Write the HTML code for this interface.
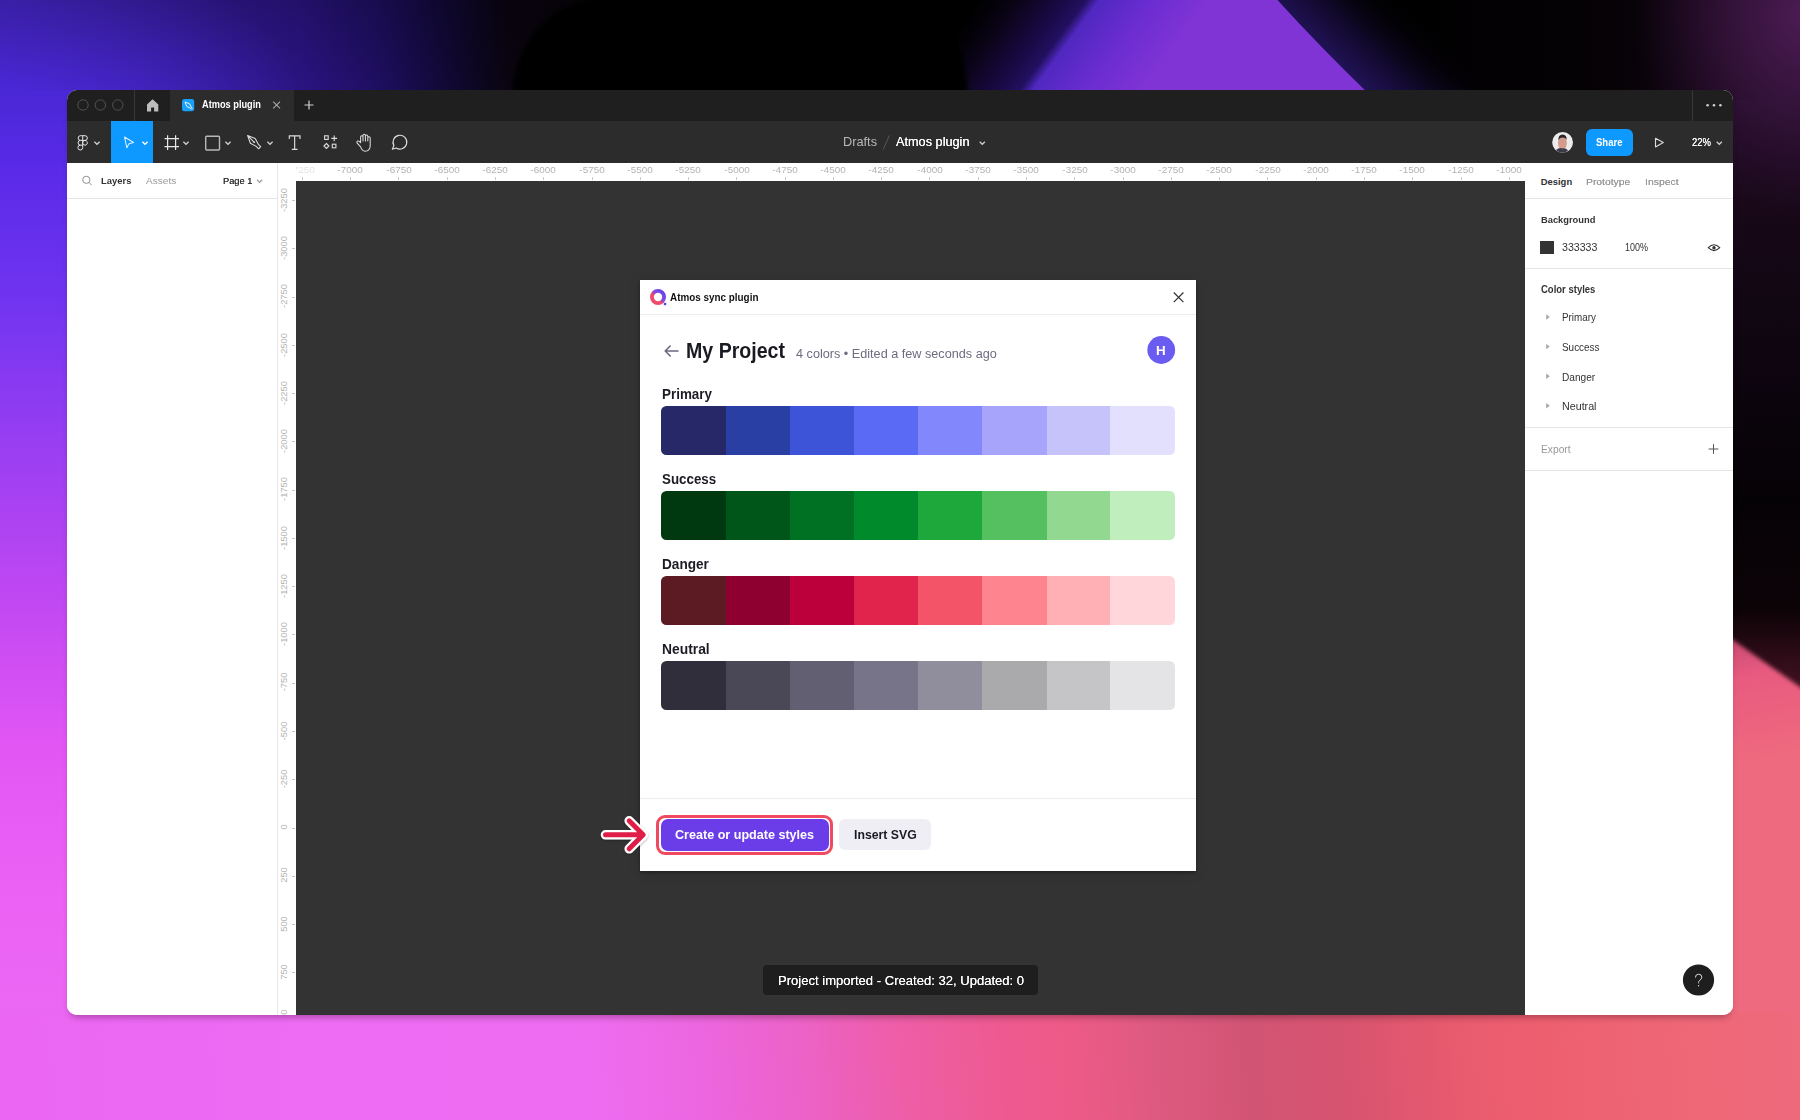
<!DOCTYPE html><html><head><meta charset="utf-8"><style>
*{box-sizing:border-box;margin:0;padding:0}
html,body{width:1800px;height:1120px;overflow:hidden}
body{position:relative;font-family:"Liberation Sans",sans-serif;background:#000}
.abs{position:absolute}
.t{position:absolute;white-space:nowrap;line-height:1}
.b{font-weight:bold}
svg{position:absolute;overflow:visible}
#win{position:absolute;left:67px;top:90px;width:1666px;height:925px;border-radius:10px;overflow:hidden;background:#fff;box-shadow:0 5px 7px -3px rgba(40,0,20,.35)}
</style></head><body>
<div class="abs" style="left:0;top:0;width:1800px;height:1120px;overflow:hidden"><svg width="1800" height="1120" style="left:0;top:0;position:absolute">
<defs>
 <linearGradient id="gTop" x1="0" y1="0" x2="1800" y2="0" gradientUnits="userSpaceOnUse">
  <stop offset="0" stop-color="#4626cc"/><stop offset="0.056" stop-color="#3c20b0"/><stop offset="0.111" stop-color="#321a98"/>
  <stop offset="0.167" stop-color="#2a1482"/><stop offset="0.211" stop-color="#1e0e60"/><stop offset="0.239" stop-color="#140a40"/>
  <stop offset="0.267" stop-color="#0c0620"/><stop offset="0.283" stop-color="#0a0410"/><stop offset="0.33" stop-color="#080308"/><stop offset="0.45" stop-color="#040204"/><stop offset="0.5" stop-color="#000"/><stop offset="0.76" stop-color="#000"/>
  <stop offset="0.9" stop-color="#060206"/><stop offset="0.95" stop-color="#140616"/><stop offset="1" stop-color="#200c26"/>
 </linearGradient>
 <radialGradient id="gTL" cx="0" cy="95" r="300" gradientUnits="userSpaceOnUse" gradientTransform="translate(0,95) scale(1,0.5) translate(0,-95)">
  <stop offset="0" stop-color="#4a28d8" stop-opacity="0.9"/><stop offset="1" stop-color="#4a28d8" stop-opacity="0"/>
 </radialGradient>
 <radialGradient id="gTR" cx="1805" cy="15" r="170" gradientUnits="userSpaceOnUse" gradientTransform="translate(1805,15) scale(1,1.2) translate(-1805,-15)">
  <stop offset="0" stop-color="#4c1c54" stop-opacity="1"/><stop offset="0.5" stop-color="#3a1540" stop-opacity="0.7"/><stop offset="1" stop-color="#2a0f30" stop-opacity="0"/>
 </radialGradient>
 <linearGradient id="gRib" x1="956.8" y1="28" x2="1108" y2="140" gradientUnits="userSpaceOnUse">
  <stop offset="0" stop-color="#080310" stop-opacity="0"/><stop offset="0.214" stop-color="#0e0520"/><stop offset="0.379" stop-color="#1a0a48"/>
  <stop offset="0.464" stop-color="#221060"/><stop offset="0.521" stop-color="#5028c0"/><stop offset="0.736" stop-color="#6a2cd0"/><stop offset="1" stop-color="#8034d6"/>
 </linearGradient>
 <linearGradient id="gRib2" x1="1300" y1="0" x2="1380" y2="95" gradientUnits="userSpaceOnUse">
  <stop offset="0" stop-color="#8436d6"/><stop offset="1" stop-color="#9238d8"/>
 </linearGradient>
 <linearGradient id="gGlow" x1="1318" y1="45" x2="1420" y2="-65" gradientUnits="userSpaceOnUse">
  <stop offset="0" stop-color="#201256"/><stop offset="0.25" stop-color="#100828"/><stop offset="0.6" stop-color="#000" stop-opacity="0"/>
 </linearGradient>
 <linearGradient id="gTopDark" x1="0" y1="0" x2="0" y2="90" gradientUnits="userSpaceOnUse">
  <stop offset="0" stop-color="#000" stop-opacity="0.2"/><stop offset="1" stop-color="#000" stop-opacity="0"/>
 </linearGradient>
 <linearGradient id="gLeft" x1="0" y1="90" x2="0" y2="1030" gradientUnits="userSpaceOnUse">
  <stop offset="0" stop-color="#4928d6"/><stop offset="0.085" stop-color="#5a2ae8"/><stop offset="0.22" stop-color="#7034f0"/>
  <stop offset="0.38" stop-color="#9a3ef2"/><stop offset="0.54" stop-color="#c048f2"/><stop offset="0.70" stop-color="#e256f4"/>
  <stop offset="0.86" stop-color="#ec62f4"/><stop offset="1" stop-color="#ea68f3"/>
 </linearGradient>
 <linearGradient id="gRight" x1="0" y1="100" x2="0" y2="700" gradientUnits="userSpaceOnUse">
  <stop offset="0" stop-color="#200c26"/><stop offset="0.18" stop-color="#180818"/><stop offset="0.43" stop-color="#0e0510"/>
  <stop offset="0.67" stop-color="#050205"/><stop offset="0.85" stop-color="#0c0307"/><stop offset="0.93" stop-color="#2e0c18"/><stop offset="1" stop-color="#4a1424"/>
 </linearGradient>
 <linearGradient id="gPinkR" x1="1733" y1="640" x2="1760" y2="760" gradientUnits="userSpaceOnUse">
  <stop offset="0" stop-color="#c84a70"/><stop offset="0.3" stop-color="#e85a80"/><stop offset="1" stop-color="#ee6a7e"/>
 </linearGradient>
 <linearGradient id="gBot" x1="0" y1="1120" x2="1800" y2="1000" gradientUnits="userSpaceOnUse">
  <stop offset="0" stop-color="#ea66f3"/><stop offset="0.17" stop-color="#ee6cf4"/><stop offset="0.333" stop-color="#ee6cf0"/>
  <stop offset="0.389" stop-color="#ec66e0"/><stop offset="0.444" stop-color="#ec62c8"/><stop offset="0.5" stop-color="#ee5ea8"/>
  <stop offset="0.556" stop-color="#ee5a90"/><stop offset="0.594" stop-color="#ee5a88"/><stop offset="0.639" stop-color="#de5a80"/>
  <stop offset="0.694" stop-color="#d25474"/><stop offset="0.75" stop-color="#d85470"/><stop offset="0.806" stop-color="#e85a6e"/>
  <stop offset="0.861" stop-color="#ee6070"/><stop offset="0.944" stop-color="#ee6878"/><stop offset="1" stop-color="#ee6a7c"/>
 </linearGradient>
 <filter id="bl2"><feGaussianBlur stdDeviation="2"/></filter>
 <filter id="bl8" x="-20%" y="-50%" width="140%" height="200%"><feGaussianBlur stdDeviation="8"/></filter>
</defs>
<rect x="0" y="0" width="1800" height="1120" fill="#000"/>
<rect x="0" y="0" width="1800" height="100" fill="url(#gTop)"/>
<rect x="0" y="0" width="520" height="100" fill="url(#gTL)"/>
<rect x="0" y="0" width="700" height="90" fill="url(#gTopDark)"/>

<path d="M1268,-6 L1272,0 Q1318,45 1371,96 L1560,96 L1560,-6 Z" fill="url(#gGlow)"/>
<path d="M800,96 L910,-6 L1272,-6 Q1318,45 1371,96 Z" fill="url(#gRib)"/>
<path d="M512,96 C515,40 550,2 600,-2 L905,-2 C950,2 965,45 968,96 Z" fill="#000" filter="url(#bl2)"/>
<rect x="0" y="90" width="90" height="945" fill="url(#gLeft)"/>
<rect x="1710" y="100" width="90" height="605" fill="url(#gRight)"/>
<rect x="1550" y="0" width="250" height="300" fill="url(#gTR)"/>
<path d="M1710,628 L1733,640 L1810,694 L1810,1040 L1710,1040 Z" fill="url(#gPinkR)" filter="url(#bl2)"/>
<rect x="0" y="1012" width="1800" height="108" fill="url(#gBot)"/>
</svg></div>
<div id="win">
<div class="abs" style="left:0;top:0;width:1666px;height:31px;background:#1f1f1f"></div>
<div class="abs" style="left:103px;top:0;width:124px;height:31px;background:#2c2c2c"></div>
<div class="abs" style="left:67px;top:0;width:1px;height:31px;background:#383838"></div>
<div class="abs" style="left:1625px;top:0;width:1px;height:31px;background:#383838"></div>
<div class="abs" style="left:0;top:31px;width:1666px;height:42px;background:#2c2c2c"></div>
<div class="abs" style="left:44px;top:31px;width:42px;height:42px;background:#0d99ff"></div>
<div class="abs" style="left:0;top:73px;width:210px;height:852px;background:#fff"></div>
<div class="abs" style="left:0;top:108px;width:210px;height:1px;background:#e5e5e5"></div>
<div class="abs" style="left:210px;top:73px;width:1248px;height:18px;background:#fff"></div>
<div class="abs" style="left:210px;top:73px;width:1px;height:852px;background:#e8e8f0"></div>
<div class="abs" style="left:229px;top:91px;width:1229px;height:834px;background:#333"></div>
<div class="abs" style="left:1458px;top:73px;width:208px;height:852px;background:#fff"></div>
<div class="abs" style="left:1458px;top:108px;width:208px;height:1px;background:#e5e5e5"></div>
<div class="abs" style="left:1458px;top:178px;width:208px;height:1px;background:#e5e5e5"></div>
<div class="abs" style="left:1458px;top:337px;width:208px;height:1px;background:#e5e5e5"></div>
<div class="abs" style="left:1458px;top:380px;width:208px;height:1px;background:#e5e5e5"></div>
</div>
<svg width="1800" height="1120" style="left:0;top:0"><circle cx="83" cy="105" r="5.2" fill="none" stroke="#505050" stroke-width="1"/><circle cx="100.4" cy="105" r="5.2" fill="none" stroke="#505050" stroke-width="1"/><circle cx="117.8" cy="105" r="5.2" fill="none" stroke="#505050" stroke-width="1"/><path d="M152.6,99.2 L158.3,104.6 V111.6 H154.1 V107.6 H151.1 V111.6 H147 V104.6 Z" fill="#bdbdbd"/><rect x="182" y="99" width="12.2" height="12.2" rx="2.5" fill="#18a0fb"/><path d="M185,102 L189.5,103.8 L191.2,107 L192.3,108.2 L191.3,109.2 L190.1,108 L186.8,106.4 Z" fill="none" stroke="#fff" stroke-width="0.9"/><path d="M273.2,101.6 L280,108.4 M280,101.6 L273.2,108.4" stroke="#a8a8a8" stroke-width="1.1"/><path d="M304.5,105 H313.5 M309,100.5 V109.5" stroke="#d0d0d0" stroke-width="1.2"/><circle cx="1707.6" cy="105.2" r="1.3" fill="#cfcfcf"/><circle cx="1714" cy="105.2" r="1.3" fill="#cfcfcf"/><circle cx="1720.4" cy="105.2" r="1.3" fill="#cfcfcf"/><path d="M82.7,135.7 H80.5 A2.35,2.35 0 0 0 80.5,140.4 H85 A2.35,2.35 0 0 0 85,135.7 H82.7 V147.6 A2.4,2.4 0 1 1 80.3,145.2 H82.7 M80.5,140.4 A2.4,2.4 0 0 0 80.5,145.2 M87.35,142.8 A2.35,2.35 0 1 1 87.35,142.79" fill="none" stroke="#e6e6e6" stroke-width="1"/><path d="M94.4,141.7 L97,144.3 L99.6,141.7" fill="none" stroke="#cfcfcf" stroke-width="1.25"/><path d="M124.5,137 L133.6,142.5 L129,143.7 L126.8,147.7 Z" fill="none" stroke="#dff2ff" stroke-width="1.05" stroke-linejoin="round"/><path d="M142.4,141.7 L145,144.3 L147.6,141.7" fill="none" stroke="#fff" stroke-width="1.25"/><path d="M167.6,135.2 V150 M175.6,135.2 V150 M164.5,138.6 H179 M164.5,146.6 H179" stroke="#e8e8e8" stroke-width="1.2"/><path d="M183.4,141.7 L186,144.3 L188.6,141.7" fill="none" stroke="#cfcfcf" stroke-width="1.25"/><rect x="205.7" y="136.2" width="13.8" height="13.8" rx="1" fill="none" stroke="#b8b8b8" stroke-width="1.4"/><path d="M225.4,141.7 L228,144.3 L230.6,141.7" fill="none" stroke="#cfcfcf" stroke-width="1.25"/><path d="M247.6,135.6 L255.2,138.4 L258.3,144.3 L260.7,146.7 L258.6,148.8 L256.2,146.4 L250.4,143.2 Z M247.6,135.6 L253.8,141.8" fill="none" stroke="#dcdcdc" stroke-width="1.05" stroke-linejoin="round"/><circle cx="254.2" cy="142.2" r="0.9" fill="#dcdcdc"/><path d="M267.4,141.7 L270,144.3 L272.6,141.7" fill="none" stroke="#cfcfcf" stroke-width="1.25"/><path d="M289.3,139 V135.8 H300 V139 M294.65,135.8 V149.4 M291.8,149.4 H297.5" fill="none" stroke="#dcdcdc" stroke-width="1.15"/><g fill="none" stroke="#dcdcdc" stroke-width="1.1"><rect x="324.6" y="135.8" width="3.6" height="3.6"/><path d="M334.2,135.5 V141.3 M331.3,138.4 H337.1"/><path d="M326.4,143.5 L328.9,146 L326.4,148.5 L323.9,146 Z"/><rect x="332.3" y="144.2" width="3.6" height="3.6"/></g><path d="M360.4,146.6 L357.2,143.2 Q356.3,141.8 357.6,141.1 Q358.6,140.7 359.6,141.7 L360.6,142.7 V137 Q360.6,135.8 361.8,135.8 Q363,135.8 363,137 V141 V135.4 Q363,134.2 364.2,134.2 Q365.4,134.2 365.4,135.4 V141 V136.2 Q365.4,135 366.6,135 Q367.8,135 367.8,136.2 V141 V138 Q367.8,136.8 369,136.8 Q370.2,136.8 370.2,138 V145.2 Q370.2,151.2 365,151.2 Q362.3,151.2 360.4,146.6 Z" fill="none" stroke="#dcdcdc" stroke-width="1.05" stroke-linejoin="round"/><path d="M392.3,149.2 L393.9,145.6 A6.9,6.9 0 1 1 396.2,148 Z" fill="none" stroke="#dcdcdc" stroke-width="1.15" stroke-linejoin="round"/><path d="M889.3,135.5 L883.2,149.5" stroke="#595959" stroke-width="1"/><path d="M979.6999999999999,141.7 L982.3,144.3 L984.9,141.7" fill="none" stroke="#cfcfcf" stroke-width="1.25"/><defs><radialGradient id="av" cx="0.5" cy="0.45" r="0.6"><stop offset="0" stop-color="#c89a86"/><stop offset="0.35" stop-color="#8a6050"/><stop offset="0.6" stop-color="#5a4a48"/><stop offset="1" stop-color="#e8e8e8"/></radialGradient></defs><circle cx="1562.6" cy="142.4" r="10.4" fill="#ececec"/><ellipse cx="1562.4" cy="143.2" rx="4.4" ry="6.4" fill="#d49a8c"/><path d="M1558.4,140.5 Q1558,134.8 1562.6,134.6 Q1567,134.8 1566.6,140 Q1565.5,137.6 1562.6,137.6 Q1559.6,137.6 1558.4,140.5 Z" fill="#2a2224"/><path d="M1556,150 Q1559,147.4 1562.4,148.4 Q1566,147.6 1568,150.6 Q1566,152.8 1562.6,152.8 Q1558.6,152.8 1556,150 Z" fill="#3c3a48"/><path d="M1655.5,138.2 L1663.3,142.6 L1655.5,147 Z" fill="none" stroke="#dcdcdc" stroke-width="1.1" stroke-linejoin="round"/><path d="M1716.7,141.7 L1719.3,144.3 L1721.8999999999999,141.7" fill="none" stroke="#cfcfcf" stroke-width="1.25"/><circle cx="86.3" cy="179.8" r="3.6" fill="none" stroke="#909090" stroke-width="1"/><path d="M88.9,182.4 L91.6,185.1" stroke="#909090" stroke-width="1"/><path d="M257.0,179.7 L259.6,182.3 L262.20000000000005,179.7" fill="none" stroke="#a0a0a0" stroke-width="1.25"/></svg>
<div class="t" style="left:202.2px;top:100.03px;font-size:10.47px;color:#fff;height:12.564px;line-height:10.47px;font-weight:bold;transform:scaleX(0.8811);transform-origin:0 0;">Atmos plugin</div>
<div class="t" style="left:842.8px;top:136.24px;font-size:12.94px;color:#b8b8b8;height:15.527999999999999px;line-height:12.94px;transform:scaleX(0.9855);transform-origin:0 0;">Drafts</div>
<div class="t" style="left:895.9px;top:136.24px;font-size:12.94px;color:#fff;height:15.527999999999999px;line-height:12.94px;transform:scaleX(0.9828);transform-origin:0 0;text-shadow:0 0 .4px #fff;">Atmos plugin</div>
<div class="abs" style="left:1586.25px;top:128.8px;width:46.75px;height:27.4px;border-radius:6px;background:#0d99ff"></div>
<div class="t" style="left:1596.25px;top:137.70px;font-size:10.03px;color:#fff;height:12.036px;line-height:10.03px;font-weight:bold;transform:scaleX(0.9490);transform-origin:0 0;">Share</div>
<div class="t" style="left:1692.0px;top:137.70px;font-size:10.03px;color:#fff;height:12.036px;line-height:10.03px;transform:scaleX(0.9468);transform-origin:0 0;text-shadow:0 0 .3px #fff;">22%</div>
<div class="t" style="left:101.2px;top:176.40px;font-size:9.45px;color:#333;height:11.339999999999998px;line-height:9.45px;font-weight:bold;transform:scaleX(0.9977);transform-origin:0 0;">Layers</div>
<div class="t" style="left:145.8px;top:176.40px;font-size:9.45px;color:#999;height:11.339999999999998px;line-height:9.45px;transform:scaleX(1.0687);transform-origin:0 0;">Assets</div>
<div class="t" style="left:222.8px;top:176.40px;font-size:9.45px;color:#333;height:11.339999999999998px;line-height:9.45px;transform:scaleX(0.9820);transform-origin:0 0;text-shadow:0 0 .3px #333;">Page 1</div>
<div class="t" style="left:1540.7px;top:176.50px;font-size:9.45px;color:#333;height:11.339999999999998px;line-height:9.45px;font-weight:bold;transform:scaleX(1.0000);transform-origin:0 0;">Design</div>
<div class="t" style="left:1586.0px;top:176.50px;font-size:9.45px;color:#999;height:11.339999999999998px;line-height:9.45px;transform:scaleX(1.0956);transform-origin:0 0;text-shadow:0 0 .3px #999;">Prototype</div>
<div class="t" style="left:1644.7px;top:176.50px;font-size:9.45px;color:#999;height:11.339999999999998px;line-height:9.45px;transform:scaleX(1.1031);transform-origin:0 0;text-shadow:0 0 .3px #999;">Inspect</div>
<div class="t" style="left:1540.8px;top:215.45px;font-size:9.74px;color:#333;height:11.688px;line-height:9.74px;font-weight:bold;transform:scaleX(0.9575);transform-origin:0 0;">Background</div>
<div class="abs" style="left:1540.3px;top:241.2px;width:13.7px;height:13.1px;background:#333"></div>
<div class="t" style="left:1561.6px;top:242.89px;font-size:10.17px;color:#333;height:12.203999999999999px;line-height:10.17px;transform:scaleX(1.0456);transform-origin:0 0;">333333</div>
<div class="t" style="left:1624.8px;top:242.89px;font-size:10.17px;color:#333;height:12.203999999999999px;line-height:10.17px;transform:scaleX(0.8837);transform-origin:0 0;">100%</div>
<div class="t" style="left:1540.6px;top:284.66px;font-size:10.32px;color:#333;height:12.384px;line-height:10.32px;font-weight:bold;transform:scaleX(0.9209);transform-origin:0 0;">Color styles</div>
<div class="t" style="left:1562.2px;top:312.31px;font-size:10.61px;color:#333;height:12.732px;line-height:10.61px;transform:scaleX(0.9277);transform-origin:0 0;">Primary</div>
<div class="t" style="left:1562.2px;top:341.91px;font-size:10.61px;color:#333;height:12.732px;line-height:10.61px;transform:scaleX(0.9352);transform-origin:0 0;">Success</div>
<div class="t" style="left:1562.2px;top:371.51px;font-size:10.61px;color:#333;height:12.732px;line-height:10.61px;transform:scaleX(0.9540);transform-origin:0 0;">Danger</div>
<div class="t" style="left:1562.2px;top:401.11px;font-size:10.61px;color:#333;height:12.732px;line-height:10.61px;transform:scaleX(1.0085);transform-origin:0 0;">Neutral</div>
<div class="t" style="left:1540.8px;top:445.00px;font-size:10.03px;color:#999;height:12.036px;line-height:10.03px;transform:scaleX(1.0213);transform-origin:0 0;">Export</div>
<svg width="1800" height="1120" style="left:0;top:0"><path d="M1546.2,314.3 L1549.8,317.0 L1546.2,319.7 Z" fill="#a8a8a8"/><path d="M1546.2,343.90000000000003 L1549.8,346.6 L1546.2,349.3 Z" fill="#a8a8a8"/><path d="M1546.2,373.5 L1549.8,376.2 L1546.2,378.9 Z" fill="#a8a8a8"/><path d="M1546.2,403.1 L1549.8,405.8 L1546.2,408.5 Z" fill="#a8a8a8"/><path d="M1708.3,247.7 Q1714,241.8 1719.7,247.7 Q1714,253.6 1708.3,247.7 Z" fill="none" stroke="#333" stroke-width="1.1"/><circle cx="1714" cy="247.7" r="1.7" fill="#333"/><path d="M1708.6,449 H1718.4 M1713.5,444.1 V453.9" stroke="#555" stroke-width="1"/></svg>
<div class="abs" style="left:277px;top:163px;width:1248px;height:852px;overflow:hidden"><div class="abs" style="left:-277px;top:-163px;width:1800px;height:1120px"><div class="abs" style="left:301.82px;top:177.3px;width:1px;height:3.2px;background:#c8c8c8"></div><div class="t" style="left:287.02px;top:165.27px;font-size:9.6px;color:#e4e4e8;height:11.52px;line-height:9.6px;width:30px;text-align:center;transform:scaleX(1.03);transform-origin:15px 0;">-7250</div><div class="abs" style="left:350.10px;top:177.3px;width:1px;height:3.2px;background:#c8c8c8"></div><div class="t" style="left:335.3px;top:165.27px;font-size:9.6px;color:#b3b3b3;height:11.52px;line-height:9.6px;width:30px;text-align:center;transform:scaleX(1.03);transform-origin:15px 0;">-7000</div><div class="abs" style="left:398.38px;top:177.3px;width:1px;height:3.2px;background:#c8c8c8"></div><div class="t" style="left:383.58px;top:165.27px;font-size:9.6px;color:#b3b3b3;height:11.52px;line-height:9.6px;width:30px;text-align:center;transform:scaleX(1.03);transform-origin:15px 0;">-6750</div><div class="abs" style="left:446.66px;top:177.3px;width:1px;height:3.2px;background:#c8c8c8"></div><div class="t" style="left:431.86px;top:165.27px;font-size:9.6px;color:#b3b3b3;height:11.52px;line-height:9.6px;width:30px;text-align:center;transform:scaleX(1.03);transform-origin:15px 0;">-6500</div><div class="abs" style="left:494.94px;top:177.3px;width:1px;height:3.2px;background:#c8c8c8"></div><div class="t" style="left:480.14px;top:165.27px;font-size:9.6px;color:#b3b3b3;height:11.52px;line-height:9.6px;width:30px;text-align:center;transform:scaleX(1.03);transform-origin:15px 0;">-6250</div><div class="abs" style="left:543.22px;top:177.3px;width:1px;height:3.2px;background:#c8c8c8"></div><div class="t" style="left:528.42px;top:165.27px;font-size:9.6px;color:#b3b3b3;height:11.52px;line-height:9.6px;width:30px;text-align:center;transform:scaleX(1.03);transform-origin:15px 0;">-6000</div><div class="abs" style="left:591.50px;top:177.3px;width:1px;height:3.2px;background:#c8c8c8"></div><div class="t" style="left:576.7px;top:165.27px;font-size:9.6px;color:#b3b3b3;height:11.52px;line-height:9.6px;width:30px;text-align:center;transform:scaleX(1.03);transform-origin:15px 0;">-5750</div><div class="abs" style="left:639.78px;top:177.3px;width:1px;height:3.2px;background:#c8c8c8"></div><div class="t" style="left:624.98px;top:165.27px;font-size:9.6px;color:#b3b3b3;height:11.52px;line-height:9.6px;width:30px;text-align:center;transform:scaleX(1.03);transform-origin:15px 0;">-5500</div><div class="abs" style="left:688.06px;top:177.3px;width:1px;height:3.2px;background:#c8c8c8"></div><div class="t" style="left:673.26px;top:165.27px;font-size:9.6px;color:#b3b3b3;height:11.52px;line-height:9.6px;width:30px;text-align:center;transform:scaleX(1.03);transform-origin:15px 0;">-5250</div><div class="abs" style="left:736.34px;top:177.3px;width:1px;height:3.2px;background:#c8c8c8"></div><div class="t" style="left:721.54px;top:165.27px;font-size:9.6px;color:#b3b3b3;height:11.52px;line-height:9.6px;width:30px;text-align:center;transform:scaleX(1.03);transform-origin:15px 0;">-5000</div><div class="abs" style="left:784.62px;top:177.3px;width:1px;height:3.2px;background:#c8c8c8"></div><div class="t" style="left:769.82px;top:165.27px;font-size:9.6px;color:#b3b3b3;height:11.52px;line-height:9.6px;width:30px;text-align:center;transform:scaleX(1.03);transform-origin:15px 0;">-4750</div><div class="abs" style="left:832.90px;top:177.3px;width:1px;height:3.2px;background:#c8c8c8"></div><div class="t" style="left:818.1px;top:165.27px;font-size:9.6px;color:#b3b3b3;height:11.52px;line-height:9.6px;width:30px;text-align:center;transform:scaleX(1.03);transform-origin:15px 0;">-4500</div><div class="abs" style="left:881.18px;top:177.3px;width:1px;height:3.2px;background:#c8c8c8"></div><div class="t" style="left:866.38px;top:165.27px;font-size:9.6px;color:#b3b3b3;height:11.52px;line-height:9.6px;width:30px;text-align:center;transform:scaleX(1.03);transform-origin:15px 0;">-4250</div><div class="abs" style="left:929.46px;top:177.3px;width:1px;height:3.2px;background:#c8c8c8"></div><div class="t" style="left:914.66px;top:165.27px;font-size:9.6px;color:#b3b3b3;height:11.52px;line-height:9.6px;width:30px;text-align:center;transform:scaleX(1.03);transform-origin:15px 0;">-4000</div><div class="abs" style="left:977.74px;top:177.3px;width:1px;height:3.2px;background:#c8c8c8"></div><div class="t" style="left:962.94px;top:165.27px;font-size:9.6px;color:#b3b3b3;height:11.52px;line-height:9.6px;width:30px;text-align:center;transform:scaleX(1.03);transform-origin:15px 0;">-3750</div><div class="abs" style="left:1026.02px;top:177.3px;width:1px;height:3.2px;background:#c8c8c8"></div><div class="t" style="left:1011.22px;top:165.27px;font-size:9.6px;color:#b3b3b3;height:11.52px;line-height:9.6px;width:30px;text-align:center;transform:scaleX(1.03);transform-origin:15px 0;">-3500</div><div class="abs" style="left:1074.30px;top:177.3px;width:1px;height:3.2px;background:#c8c8c8"></div><div class="t" style="left:1059.5px;top:165.27px;font-size:9.6px;color:#b3b3b3;height:11.52px;line-height:9.6px;width:30px;text-align:center;transform:scaleX(1.03);transform-origin:15px 0;">-3250</div><div class="abs" style="left:1122.58px;top:177.3px;width:1px;height:3.2px;background:#c8c8c8"></div><div class="t" style="left:1107.78px;top:165.27px;font-size:9.6px;color:#b3b3b3;height:11.52px;line-height:9.6px;width:30px;text-align:center;transform:scaleX(1.03);transform-origin:15px 0;">-3000</div><div class="abs" style="left:1170.86px;top:177.3px;width:1px;height:3.2px;background:#c8c8c8"></div><div class="t" style="left:1156.06px;top:165.27px;font-size:9.6px;color:#b3b3b3;height:11.52px;line-height:9.6px;width:30px;text-align:center;transform:scaleX(1.03);transform-origin:15px 0;">-2750</div><div class="abs" style="left:1219.14px;top:177.3px;width:1px;height:3.2px;background:#c8c8c8"></div><div class="t" style="left:1204.34px;top:165.27px;font-size:9.6px;color:#b3b3b3;height:11.52px;line-height:9.6px;width:30px;text-align:center;transform:scaleX(1.03);transform-origin:15px 0;">-2500</div><div class="abs" style="left:1267.42px;top:177.3px;width:1px;height:3.2px;background:#c8c8c8"></div><div class="t" style="left:1252.62px;top:165.27px;font-size:9.6px;color:#b3b3b3;height:11.52px;line-height:9.6px;width:30px;text-align:center;transform:scaleX(1.03);transform-origin:15px 0;">-2250</div><div class="abs" style="left:1315.70px;top:177.3px;width:1px;height:3.2px;background:#c8c8c8"></div><div class="t" style="left:1300.9px;top:165.27px;font-size:9.6px;color:#b3b3b3;height:11.52px;line-height:9.6px;width:30px;text-align:center;transform:scaleX(1.03);transform-origin:15px 0;">-2000</div><div class="abs" style="left:1363.98px;top:177.3px;width:1px;height:3.2px;background:#c8c8c8"></div><div class="t" style="left:1349.18px;top:165.27px;font-size:9.6px;color:#b3b3b3;height:11.52px;line-height:9.6px;width:30px;text-align:center;transform:scaleX(1.03);transform-origin:15px 0;">-1750</div><div class="abs" style="left:1412.26px;top:177.3px;width:1px;height:3.2px;background:#c8c8c8"></div><div class="t" style="left:1397.46px;top:165.27px;font-size:9.6px;color:#b3b3b3;height:11.52px;line-height:9.6px;width:30px;text-align:center;transform:scaleX(1.03);transform-origin:15px 0;">-1500</div><div class="abs" style="left:1460.54px;top:177.3px;width:1px;height:3.2px;background:#c8c8c8"></div><div class="t" style="left:1445.74px;top:165.27px;font-size:9.6px;color:#b3b3b3;height:11.52px;line-height:9.6px;width:30px;text-align:center;transform:scaleX(1.03);transform-origin:15px 0;">-1250</div><div class="abs" style="left:1508.82px;top:177.3px;width:1px;height:3.2px;background:#c8c8c8"></div><div class="t" style="left:1494.02px;top:165.27px;font-size:9.6px;color:#b3b3b3;height:11.52px;line-height:9.6px;width:30px;text-align:center;transform:scaleX(1.03);transform-origin:15px 0;">-1000</div><div class="abs" style="left:292px;top:151.73px;width:3px;height:1px;background:#c8c8c8"></div><div class="t" style="left:269.10px;top:146.43px;width:30px;height:10px;line-height:10px;font-size:9.8px;color:#b3b3b3;text-align:center;transform:rotate(-90deg) scaleX(0.95);transform-origin:15px 5px">-3500</div><div class="abs" style="left:292px;top:200.00px;width:3px;height:1px;background:#c8c8c8"></div><div class="t" style="left:269.10px;top:194.70px;width:30px;height:10px;line-height:10px;font-size:9.8px;color:#b3b3b3;text-align:center;transform:rotate(-90deg) scaleX(0.95);transform-origin:15px 5px">-3250</div><div class="abs" style="left:292px;top:248.27px;width:3px;height:1px;background:#c8c8c8"></div><div class="t" style="left:269.10px;top:242.97px;width:30px;height:10px;line-height:10px;font-size:9.8px;color:#b3b3b3;text-align:center;transform:rotate(-90deg) scaleX(0.95);transform-origin:15px 5px">-3000</div><div class="abs" style="left:292px;top:296.54px;width:3px;height:1px;background:#c8c8c8"></div><div class="t" style="left:269.10px;top:291.24px;width:30px;height:10px;line-height:10px;font-size:9.8px;color:#b3b3b3;text-align:center;transform:rotate(-90deg) scaleX(0.95);transform-origin:15px 5px">-2750</div><div class="abs" style="left:292px;top:344.81px;width:3px;height:1px;background:#c8c8c8"></div><div class="t" style="left:269.10px;top:339.51px;width:30px;height:10px;line-height:10px;font-size:9.8px;color:#b3b3b3;text-align:center;transform:rotate(-90deg) scaleX(0.95);transform-origin:15px 5px">-2500</div><div class="abs" style="left:292px;top:393.08px;width:3px;height:1px;background:#c8c8c8"></div><div class="t" style="left:269.10px;top:387.78px;width:30px;height:10px;line-height:10px;font-size:9.8px;color:#b3b3b3;text-align:center;transform:rotate(-90deg) scaleX(0.95);transform-origin:15px 5px">-2250</div><div class="abs" style="left:292px;top:441.35px;width:3px;height:1px;background:#c8c8c8"></div><div class="t" style="left:269.10px;top:436.05px;width:30px;height:10px;line-height:10px;font-size:9.8px;color:#b3b3b3;text-align:center;transform:rotate(-90deg) scaleX(0.95);transform-origin:15px 5px">-2000</div><div class="abs" style="left:292px;top:489.62px;width:3px;height:1px;background:#c8c8c8"></div><div class="t" style="left:269.10px;top:484.32px;width:30px;height:10px;line-height:10px;font-size:9.8px;color:#b3b3b3;text-align:center;transform:rotate(-90deg) scaleX(0.95);transform-origin:15px 5px">-1750</div><div class="abs" style="left:292px;top:537.89px;width:3px;height:1px;background:#c8c8c8"></div><div class="t" style="left:269.10px;top:532.59px;width:30px;height:10px;line-height:10px;font-size:9.8px;color:#b3b3b3;text-align:center;transform:rotate(-90deg) scaleX(0.95);transform-origin:15px 5px">-1500</div><div class="abs" style="left:292px;top:586.16px;width:3px;height:1px;background:#c8c8c8"></div><div class="t" style="left:269.10px;top:580.86px;width:30px;height:10px;line-height:10px;font-size:9.8px;color:#b3b3b3;text-align:center;transform:rotate(-90deg) scaleX(0.95);transform-origin:15px 5px">-1250</div><div class="abs" style="left:292px;top:634.43px;width:3px;height:1px;background:#c8c8c8"></div><div class="t" style="left:269.10px;top:629.13px;width:30px;height:10px;line-height:10px;font-size:9.8px;color:#b3b3b3;text-align:center;transform:rotate(-90deg) scaleX(0.95);transform-origin:15px 5px">-1000</div><div class="abs" style="left:292px;top:682.70px;width:3px;height:1px;background:#c8c8c8"></div><div class="t" style="left:269.10px;top:677.40px;width:30px;height:10px;line-height:10px;font-size:9.8px;color:#b3b3b3;text-align:center;transform:rotate(-90deg) scaleX(0.95);transform-origin:15px 5px">-750</div><div class="abs" style="left:292px;top:730.97px;width:3px;height:1px;background:#c8c8c8"></div><div class="t" style="left:269.10px;top:725.67px;width:30px;height:10px;line-height:10px;font-size:9.8px;color:#b3b3b3;text-align:center;transform:rotate(-90deg) scaleX(0.95);transform-origin:15px 5px">-500</div><div class="abs" style="left:292px;top:779.24px;width:3px;height:1px;background:#c8c8c8"></div><div class="t" style="left:269.10px;top:773.94px;width:30px;height:10px;line-height:10px;font-size:9.8px;color:#b3b3b3;text-align:center;transform:rotate(-90deg) scaleX(0.95);transform-origin:15px 5px">-250</div><div class="abs" style="left:292px;top:827.51px;width:3px;height:1px;background:#c8c8c8"></div><div class="t" style="left:269.10px;top:822.21px;width:30px;height:10px;line-height:10px;font-size:9.8px;color:#b3b3b3;text-align:center;transform:rotate(-90deg) scaleX(0.95);transform-origin:15px 5px">0</div><div class="abs" style="left:292px;top:875.78px;width:3px;height:1px;background:#c8c8c8"></div><div class="t" style="left:269.10px;top:870.48px;width:30px;height:10px;line-height:10px;font-size:9.8px;color:#b3b3b3;text-align:center;transform:rotate(-90deg) scaleX(0.95);transform-origin:15px 5px">250</div><div class="abs" style="left:292px;top:924.05px;width:3px;height:1px;background:#c8c8c8"></div><div class="t" style="left:269.10px;top:918.75px;width:30px;height:10px;line-height:10px;font-size:9.8px;color:#b3b3b3;text-align:center;transform:rotate(-90deg) scaleX(0.95);transform-origin:15px 5px">500</div><div class="abs" style="left:292px;top:972.32px;width:3px;height:1px;background:#c8c8c8"></div><div class="t" style="left:269.10px;top:967.02px;width:30px;height:10px;line-height:10px;font-size:9.8px;color:#b3b3b3;text-align:center;transform:rotate(-90deg) scaleX(0.95);transform-origin:15px 5px">750</div><div class="abs" style="left:292px;top:1020.59px;width:3px;height:1px;background:#c8c8c8"></div><div class="t" style="left:269.10px;top:1015.29px;width:30px;height:10px;line-height:10px;font-size:9.8px;color:#b3b3b3;text-align:center;transform:rotate(-90deg) scaleX(0.95);transform-origin:15px 5px">1000</div></div></div>
<div class="abs" style="left:296px;top:181px;width:1229px;height:834px;background:#333"></div>
<div class="abs" style="left:278px;top:163.5px;width:18px;height:17.5px;background:#fff"></div>
<div class="abs" style="left:277px;top:163px;width:1px;height:852px;background:#e6e6ee"></div>
<div class="abs" style="left:640px;top:280px;width:556px;height:591px;background:#fff;box-shadow:0 1.5px 3px rgba(0,0,0,.3),0 2px 12px rgba(0,0,0,.12)"></div>
<div class="abs" style="left:640px;top:313.8px;width:556px;height:1px;background:#ebebf0"></div>
<div class="abs" style="left:640px;top:797.6px;width:556px;height:1px;background:#ececf0"></div>
<svg width="1800" height="1120" style="left:0;top:0"><defs><linearGradient id="lg" x1="1" y1="0" x2="0" y2="1"><stop offset="0" stop-color="#5b44f8"/><stop offset="0.45" stop-color="#8a48d8"/><stop offset="0.6" stop-color="#ee4a6c"/><stop offset="1" stop-color="#f04a68"/></linearGradient></defs><circle cx="658" cy="297" r="6.1" fill="none" stroke="url(#lg)" stroke-width="3.8"/><rect x="663.8" y="302.8" width="2.4" height="2.4" fill="#5a3cf5"/><path d="M1173.8,292.5 L1183.4,302.1 M1183.4,292.5 L1173.8,302.1" stroke="#333" stroke-width="1.2"/><path d="M678,351 H665.2 M670.2,346 L665.2,351 L670.2,356" fill="none" stroke="#6b6880" stroke-width="1.6" stroke-linejoin="round" stroke-linecap="round"/><circle cx="1161.25" cy="350" r="13.9" fill="#6a5cf0"/></svg>
<div class="t" style="left:670.3px;top:292.53px;font-size:10.47px;color:#111;height:12.564px;line-height:10.47px;font-weight:bold;transform:scaleX(0.9443);transform-origin:0 0;">Atmos sync plugin</div>
<div class="t" style="left:686.0px;top:340.33px;font-size:21.22px;color:#1a1a22;height:25.464px;line-height:21.22px;font-weight:bold;transform:scaleX(0.9225);transform-origin:0 0;">My Project</div>
<div class="t" style="left:796.4px;top:348.01px;font-size:12.5px;color:#6e6b80;height:15.0px;line-height:12.5px;transform:scaleX(1.0129);transform-origin:0 0;">4 colors &#8226; Edited a few seconds ago</div>
<div class="t" style="left:1156.4px;top:343.78px;font-size:13.37px;color:#fff;height:16.043999999999997px;line-height:13.37px;font-weight:bold;transform:scaleX(1.0047);transform-origin:0 0;">H</div>
<div class="t" style="left:661.7px;top:386.84px;font-size:14.83px;color:#1c1c24;height:17.796px;line-height:14.83px;font-weight:bold;transform:scaleX(0.9054);transform-origin:0 0;">Primary</div>
<div class="abs" style="left:661.4px;top:406.4px;width:513.3px;height:48.6px;border-radius:5.5px;overflow:hidden"><div class="abs" style="left:0.00px;top:0;width:65.10px;height:48.6px;background:#262868"></div><div class="abs" style="left:64.50px;top:0;width:64.60px;height:48.6px;background:#2a3fa3"></div><div class="abs" style="left:128.50px;top:0;width:64.50px;height:48.6px;background:#3d53d8"></div><div class="abs" style="left:192.40px;top:0;width:64.50px;height:48.6px;background:#5a6af5"></div><div class="abs" style="left:256.30px;top:0;width:64.90px;height:48.6px;background:#8288fb"></div><div class="abs" style="left:320.60px;top:0;width:65.40px;height:48.6px;background:#a7a5fb"></div><div class="abs" style="left:385.40px;top:0;width:63.90px;height:48.6px;background:#c6c3fb"></div><div class="abs" style="left:448.70px;top:0;width:64.60px;height:48.6px;background:#e2e0fd"></div></div>
<div class="t" style="left:661.7px;top:471.84px;font-size:14.83px;color:#1c1c24;height:17.796px;line-height:14.83px;font-weight:bold;transform:scaleX(0.9007);transform-origin:0 0;">Success</div>
<div class="abs" style="left:661.4px;top:491.4px;width:513.3px;height:48.6px;border-radius:5.5px;overflow:hidden"><div class="abs" style="left:0.00px;top:0;width:65.10px;height:48.6px;background:#003810"></div><div class="abs" style="left:64.50px;top:0;width:64.60px;height:48.6px;background:#005518"></div><div class="abs" style="left:128.50px;top:0;width:64.50px;height:48.6px;background:#007022"></div><div class="abs" style="left:192.40px;top:0;width:64.50px;height:48.6px;background:#008a2c"></div><div class="abs" style="left:256.30px;top:0;width:64.90px;height:48.6px;background:#1ea83c"></div><div class="abs" style="left:320.60px;top:0;width:65.40px;height:48.6px;background:#54c060"></div><div class="abs" style="left:385.40px;top:0;width:63.90px;height:48.6px;background:#92d890"></div><div class="abs" style="left:448.70px;top:0;width:64.60px;height:48.6px;background:#c0eebd"></div></div>
<div class="t" style="left:661.7px;top:556.84px;font-size:14.83px;color:#1c1c24;height:17.796px;line-height:14.83px;font-weight:bold;transform:scaleX(0.9183);transform-origin:0 0;">Danger</div>
<div class="abs" style="left:661.4px;top:576.4px;width:513.3px;height:48.6px;border-radius:5.5px;overflow:hidden"><div class="abs" style="left:0.00px;top:0;width:65.10px;height:48.6px;background:#5c1a22"></div><div class="abs" style="left:64.50px;top:0;width:64.60px;height:48.6px;background:#8e0030"></div><div class="abs" style="left:128.50px;top:0;width:64.50px;height:48.6px;background:#bc003c"></div><div class="abs" style="left:192.40px;top:0;width:64.50px;height:48.6px;background:#e0244c"></div><div class="abs" style="left:256.30px;top:0;width:64.90px;height:48.6px;background:#f45468"></div><div class="abs" style="left:320.60px;top:0;width:65.40px;height:48.6px;background:#fe8590"></div><div class="abs" style="left:385.40px;top:0;width:63.90px;height:48.6px;background:#feb0b4"></div><div class="abs" style="left:448.70px;top:0;width:64.60px;height:48.6px;background:#ffd7da"></div></div>
<div class="t" style="left:661.7px;top:641.84px;font-size:14.83px;color:#1c1c24;height:17.796px;line-height:14.83px;font-weight:bold;transform:scaleX(0.9339);transform-origin:0 0;">Neutral</div>
<div class="abs" style="left:661.4px;top:661.4px;width:513.3px;height:48.6px;border-radius:5.5px;overflow:hidden"><div class="abs" style="left:0.00px;top:0;width:65.10px;height:48.6px;background:#302e3a"></div><div class="abs" style="left:64.50px;top:0;width:64.60px;height:48.6px;background:#4a4756"></div><div class="abs" style="left:128.50px;top:0;width:64.50px;height:48.6px;background:#625f72"></div><div class="abs" style="left:192.40px;top:0;width:64.50px;height:48.6px;background:#777489"></div><div class="abs" style="left:256.30px;top:0;width:64.90px;height:48.6px;background:#908e9c"></div><div class="abs" style="left:320.60px;top:0;width:65.40px;height:48.6px;background:#aaaaac"></div><div class="abs" style="left:385.40px;top:0;width:63.90px;height:48.6px;background:#c5c5c8"></div><div class="abs" style="left:448.70px;top:0;width:64.60px;height:48.6px;background:#e4e4e6"></div></div>
<div class="abs" style="left:656px;top:815px;width:176.6px;height:39.6px;border-radius:9px;border:3px solid #f04a60;background:#fff"></div>
<div class="abs" style="left:660.8px;top:818.8px;width:168px;height:32px;border-radius:7px;background:#6a3de8"></div>
<div class="t" style="left:675.2px;top:828.45px;font-size:13.52px;color:#fff;height:16.224px;line-height:13.52px;font-weight:bold;transform:scaleX(0.9304);transform-origin:0 0;">Create or update styles</div>
<div class="abs" style="left:839px;top:819.4px;width:91.6px;height:31px;border-radius:6px;background:#efeef5"></div>
<div class="t" style="left:853.6px;top:828.45px;font-size:13.52px;color:#1a1a22;height:16.224px;line-height:13.52px;font-weight:bold;transform:scaleX(0.9072);transform-origin:0 0;">Insert SVG</div>
<svg width="1800" height="1120" style="left:0;top:0"><defs><filter id="ash" x="-30%" y="-30%" width="160%" height="160%"><feDropShadow dx="0" dy="1" stdDeviation="1.2" flood-color="#000" flood-opacity="0.35"/></filter></defs><g filter="url(#ash)"><path d="M605.5,834.8 H641.5 M629.2,820.8 L643.2,834.8 L629.2,848.8" fill="none" stroke="#fff" stroke-width="9.5" stroke-linecap="round" stroke-linejoin="round"/><path d="M605.5,834.8 H641.5 M629.2,820.8 L643.2,834.8 L629.2,848.8" fill="none" stroke="#e01e48" stroke-width="5" stroke-linecap="round" stroke-linejoin="round"/></g></svg>
<div class="abs" style="left:763.3px;top:965px;width:274.5px;height:30.3px;border-radius:4px;background:#1e1e1e"></div>
<div class="t" style="left:777.8px;top:973.92px;font-size:13.08px;color:#fff;height:15.696px;line-height:13.08px;transform:scaleX(0.9988);transform-origin:0 0;text-shadow:0 0 .3px #fff;">Project imported - Created: 32, Updated: 0</div>
<svg width="1800" height="1120" style="left:0;top:0"><circle cx="1698.5" cy="980" r="15.6" fill="#1e1e1e"/><path d="M1695.4,977.6 Q1695.4,974.2 1698.6,974.2 Q1701.8,974.2 1701.8,977.2 Q1701.8,979 1699.8,980.2 Q1698.6,981 1698.6,982.6 V983.4" fill="none" stroke="#d8d8d8" stroke-width="1"/><circle cx="1698.6" cy="985.8" r="0.7" fill="#d8d8d8"/></svg>
</body></html>
